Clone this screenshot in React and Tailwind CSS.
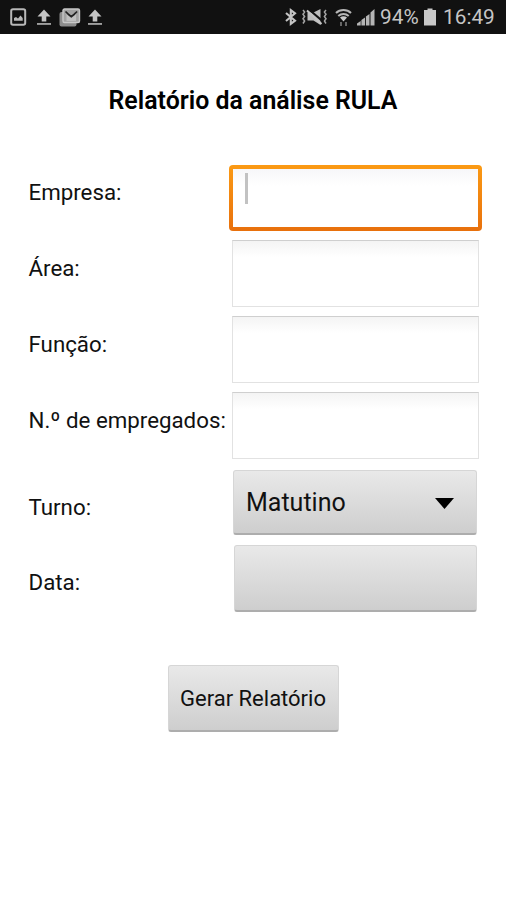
import clsx from "clsx";

const fields = [
  { id: "empresa", label: "Empresa:", focused: true },
  { id: "area", label: "Área:" },
  { id: "funcao", label: "Função:" },
  { id: "empregados", label: "N.º de empregados:" },
];

const buttonStyle =
  "rounded-[3px] border border-[#d6d6d6] border-b-2 border-b-[#adadad] bg-linear-to-b from-[#e9e9e9] to-[#cecece] text-[#111111]";

function UploadIcon() {
  return (
    <svg width="14" height="17" viewBox="0 0 14 17" fill="#c4c4c4">
      <path d="M7 0.5L13.5 7.5H9.3V12.5H4.7V7.5H0.5Z" />
      <path d="M0 14.2h14v1.5H0z" />
    </svg>
  );
}

function ImageIcon() {
  return (
    <svg width="17" height="18" viewBox="0 0 17 18">
      <rect x="1.2" y="1.2" width="14" height="15.6" rx="1.8" fill="none" stroke="#b8b8b8" strokeWidth="2" />
      <path d="M4 12.8V10l2-1 2 1.5L10.5 7.5l2.2 2.5v2.8z" fill="#b8b8b8" />
    </svg>
  );
}

function MailIcon() {
  return (
    <svg width="22" height="19" viewBox="0 0 22 19">
      <rect x="0.5" y="4" width="17" height="14.5" rx="2" fill="#8c8c8c" />
      <rect x="4" y="1" width="16.5" height="13.5" rx="1.5" fill="#a2a2a2" stroke="#c8c8c8" strokeWidth="1.4" />
      <path d="M7.5 6l4.8 4 4.8-4v7H7.5z" fill="#c0c0c0" />
      <path d="M6.5 3.5l2.8 2.6M18.1 3.5l-2.8 2.6M9 6l3.3 2.7L15.6 6" fill="none" stroke="#222" strokeWidth="1.7" />
    </svg>
  );
}

function BluetoothIcon() {
  return (
    <svg width="12" height="18" viewBox="0 0 12 18" fill="none" stroke="#c4c4c4" strokeWidth="2.1">
      <path d="M1 5l9 7.6-4.2 3.2V2.2L10 5.4 1 13" />
    </svg>
  );
}

function MuteIcon() {
  return (
    <svg width="27" height="18" viewBox="0 0 27 18">
      <path
        d="M2 2l1.6 2L2 6.3l1.6 2.2L2 10.8l1.6 2.2L2 15.5M25 2l-1.6 2L25 6.3l-1.6 2.2L25 10.8l-1.6 2.2L25 15.5"
        fill="none"
        stroke="#a5a5a5"
        strokeWidth="1.5"
      />
      <path d="M6.5 4.5h6l7-3.5v16l-7-4.5h-6z" fill="#bdbdbd" />
      <path d="M8 1.5l14 12" stroke="#111" strokeWidth="2.2" />
      <path d="M6 2.5l14.5 13.5" stroke="#c4c4c4" strokeWidth="2" />
    </svg>
  );
}

function WifiIcon() {
  return (
    <svg width="17" height="19" viewBox="0 0 17 19">
      <g fill="none" stroke="#b5b5b5" strokeWidth="2">
        <path d="M1 5C5 1 12 1 16 5" />
        <path d="M3.3 8c3-2.8 7.4-2.8 10.4 0" />
      </g>
      <path d="M5 9.5c2-1.7 5-1.7 7 0l-3.5 4z" fill="#c8c8c8" />
      <path d="M6 14v4M11 14v4" stroke="#666" strokeWidth="2" />
    </svg>
  );
}

function SignalIcon() {
  return (
    <svg width="18" height="18" viewBox="0 0 18 18" fill="#b5b5b5">
      <path d="M0 15.5l3.7-2.5v4.5H0zM4.4 12l3.6-2.5v8H4.4zM8.9 8.5l3.6-2.5v11.5H8.9zM13.5 4.5l4-3.5v16.5h-4z" />
    </svg>
  );
}

function BatteryIcon() {
  return (
    <svg width="12" height="18" viewBox="0 0 12 18" fill="#c8c8c8">
      <path d="M3.5 0.5h5V2H12v15.5H0V2h3.5z" />
    </svg>
  );
}

function StatusBar() {
  return (
    <header className="flex h-[34px] items-center bg-[#111111] pr-[10px] pl-[10px] text-[20.8px] text-[#c6c6c6]">
      <div className="flex items-center">
        <ImageIcon />
        <div className="ml-[10px]">
          <UploadIcon />
        </div>
        <div className="ml-[8px]">
          <MailIcon />
        </div>
        <div className="ml-[7px]">
          <UploadIcon />
        </div>
      </div>
      <div className="ml-auto flex items-center">
        <BluetoothIcon />
        <div className="ml-[4px]">
          <MuteIcon />
        </div>
        <div className="ml-[7px]">
          <WifiIcon />
        </div>
        <div className="mr-[5px] ml-[5px]">
          <SignalIcon />
        </div>
        <span className="w-[40px] pt-[2px] whitespace-nowrap">94%</span>
        <div className="mr-[7px] ml-[4px]">
          <BatteryIcon />
        </div>
        <span className="w-[53px] pt-[2px] whitespace-nowrap">16:49</span>
      </div>
    </header>
  );
}

function TextField({ id, focused }) {
  return (
    <div
      className={clsx(
        "flex shrink-0",
        focused
          ? "mr-[24px] h-[66px] w-[253px] rounded-[4px] bg-linear-to-b from-[#fb9a14] to-[#e8700c] p-[4px]"
          : "mr-[27px] mb-[2px] h-[67px] w-[247px] border border-[#e2e2e2] border-t-[#cfcfcf] bg-linear-to-b from-[#f4f4f4] to-white to-25%"
      )}
    >
      <div
        className={clsx(
          "flex-1",
          focused && "bg-linear-to-b from-[#f7f7f9] to-white to-30% pt-[4px] pl-[12px]"
        )}
      >
        {focused && <div className="h-[31px] w-[3px] bg-[#c2c2c2]" />}
        <input id={id} className="sr-only" />
      </div>
    </div>
  );
}

export default function App() {
  return (
    <div className="flex h-[900px] w-[506px] flex-col overflow-hidden bg-white font-['Roboto',sans-serif] text-[#111111]">
      <StatusBar />
      <h1 className="mt-[51px] text-center text-[24.9px] leading-[32px] font-semibold text-black">
        Relatório da análise RULA
      </h1>

      <form className="mt-[43px] flex flex-col text-[22.3px] leading-[32px]">
        {fields.map((field) => (
          <div key={field.id} className="flex h-[76px] items-center justify-between pl-[28.5px]">
            <label htmlFor={field.id} className="-mt-[12px] whitespace-nowrap">
              {field.label}
            </label>
            <TextField id={field.id} focused={field.focused} />
          </div>
        ))}

        <div className="mt-[6px] flex h-[65px] items-center justify-between pr-[29px] pl-[28.5px]">
          <span className="mt-[8px]">Turno:</span>
          <button
            type="button"
            className={clsx(
              buttonStyle,
              "flex h-[65px] w-[244px] items-center justify-between pt-[2px] pr-[22px] pl-[12px] text-[25px]"
            )}
          >
            Matutino
            <svg width="19" height="11" viewBox="0 0 19 11">
              <path d="M0 0h19L9.5 11z" fill="#000" />
            </svg>
          </button>
        </div>
        <div className="mt-[10px] flex h-[67px] items-center justify-between pr-[29px] pl-[28.5px]">
          <span className="mt-[6px]">Data:</span>
          <button type="button" className={clsx(buttonStyle, "h-[67px] w-[243px]")} />
        </div>

        <button
          type="button"
          className={clsx(
            buttonStyle,
            "mt-[53px] h-[67px] w-[171px] self-center pt-[2px] text-[22px] whitespace-nowrap"
          )}
        >
          Gerar Relatório
        </button>
      </form>
    </div>
  );
}
